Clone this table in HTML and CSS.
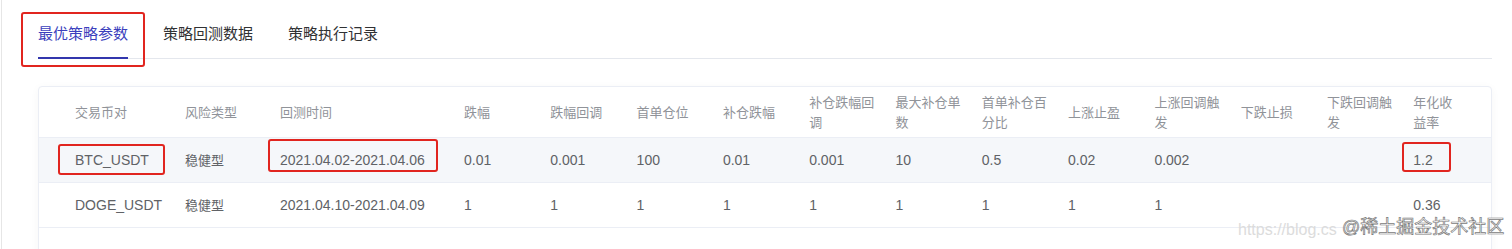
FILE: index.html
```html
<!DOCTYPE html>
<html lang="zh-CN">
<head>
<meta charset="utf-8">
<title>最优策略参数</title>
<link rel="stylesheet" href="styles.css">
</head>
<body>
<div class="page">
  <div class="tabs">
    <div class="tab active"><i class="mark mark-tab"></i>最优策略参数</div>
    <div class="tab">策略回测数据</div>
    <div class="tab">策略执行记录</div>
  </div>

  <div class="card">
    <table class="grid">
      <colgroup>
        <col class="c-pair"><col class="c-risk"><col class="c-time">
        <col class="c-num"><col class="c-num"><col class="c-num"><col class="c-num">
        <col class="c-num"><col class="c-num"><col class="c-num"><col class="c-num">
        <col class="c-num"><col class="c-num"><col class="c-num"><col>
      </colgroup>
      <thead>
        <tr>
          <th>交易币对</th>
          <th>风险类型</th>
          <th>回测时间</th>
          <th>跌幅</th>
          <th>跌幅回调</th>
          <th>首单仓位</th>
          <th>补仓跌幅</th>
          <th>补仓跌幅回<br>调</th>
          <th>最大补仓单<br>数</th>
          <th>首单补仓百<br>分比</th>
          <th>上涨止盈</th>
          <th>上涨回调触<br>发</th>
          <th>下跌止损</th>
          <th>下跌回调触<br>发</th>
          <th>年化收<br>益率</th>
        </tr>
      </thead>
      <tbody>
        <tr class="hover">
          <td><span class="hl">BTC_USDT<i class="mark mark-btc"></i></span></td>
          <td class="cn">稳健型</td>
          <td><span class="hl">2021.04.02-2021.04.06<i class="mark mark-date"></i></span></td>
          <td>0.01</td>
          <td>0.001</td>
          <td>100</td>
          <td>0.01</td>
          <td>0.001</td>
          <td>10</td>
          <td>0.5</td>
          <td>0.02</td>
          <td>0.002</td>
          <td></td>
          <td></td>
          <td><span class="hl">1.2<i class="mark mark-rate"></i></span></td>
        </tr>
        <tr>
          <td>DOGE_USDT</td>
          <td class="cn">稳健型</td>
          <td>2021.04.10-2021.04.09</td>
          <td>1</td>
          <td>1</td>
          <td>1</td>
          <td>1</td>
          <td>1</td>
          <td>1</td>
          <td>1</td>
          <td>1</td>
          <td>1</td>
          <td></td>
          <td></td>
          <td>0.36</td>
        </tr>
      </tbody>
    </table>
  </div>

  <div class="wm-url">https://blog.cs</div>
  <div class="wm-brand">@稀土掘金技术社区</div>
</div>
</body>
</html>
```

FILE: styles.css
```css
* { box-sizing: border-box; }

html, body {
  margin: 0;
  padding: 0;
  background: #ffffff;
  overflow: hidden;
}

body {
  font-family: "Liberation Sans", "Noto Sans CJK SC", sans-serif;
  color: #606266;
}

.page {
  position: relative;
  margin-left: 1px;
  border-left: 1px solid #e6e6e6;
  padding: 0 20px 0 36px;
  height: 249px;
  overflow: hidden;
}

/* ---------- tabs ---------- */
.tabs {
  display: flex;
  gap: 35px;
  border-bottom: 1px solid #e4e7ed;
}

.tab {
  position: relative;
  height: 58px;
  padding-top: 22px;
  line-height: 22px;
  font-family: "Noto Sans CJK SC", sans-serif;
  font-size: 15px;
  color: #303133;
}

.tab.active {
  color: #3b3fbd;
}

.tab.active::after {
  content: "";
  position: absolute;
  left: 0;
  right: 0;
  bottom: -1px;
  height: 2px;
  background: #3236ad;
}

/* ---------- red annotation boxes ---------- */
.mark {
  position: absolute;
  border: 2px solid #e1251f;
  border-radius: 3px;
  pointer-events: none;
}

.mark-tab {
  top: 12px;
  left: -17px;
  right: -17px;
  height: 55px;
}

.hl {
  position: relative;
  display: inline-block;
  line-height: 20px;
}

.mark-btc  { top: -6px;  bottom: -5px; left: -17px; right: -16px; }
.mark-date { top: -11px; bottom: -2px; left: -12px; right: -13px; }
.mark-rate { top: -8px;  bottom: -2px; left: -11px; right: -18px; }

/* ---------- card / table ---------- */
.card {
  margin-top: 27px;
  border: 1px solid #ebeef5;
  border-radius: 4px;
  box-shadow: 0 2px 10px 0 rgba(0, 0, 0, 0.04);
  padding-bottom: 40px;
  background: #fff;
}

.grid {
  width: 100%;
  table-layout: fixed;
  border-collapse: separate;
  border-spacing: 0;
}

.c-pair { width: 136px; }
.c-risk { width: 95px; }
.c-time { width: 184px; }
.c-num  { width: 86.3px; }

.grid th,
.grid td {
  text-align: left;
  padding: 0 10px;
  border-bottom: 1px solid #ebeef5;
  vertical-align: middle;
  line-height: 20px;
  white-space: nowrap;
}

.grid th:first-child,
.grid td:first-child {
  padding-left: 36px;
}

.grid th {
  height: 51px;
  font-family: "Noto Sans CJK SC", sans-serif;
  font-size: 13px;
  font-weight: normal;
  color: #909399;
}

.grid td {
  height: 45px;
  font-size: 14px;
  color: #606266;
}

.grid td.cn {
  font-family: "Noto Sans CJK SC", sans-serif;
  font-size: 13px;
}

.grid tr.hover td {
  background: #f5f7fa;
}

/* ---------- watermark ---------- */
.wm-url {
  position: absolute;
  left: 1236px;
  top: 221px;
  font-size: 16px;
  line-height: 18px;
  color: #dcdcdc;
  white-space: nowrap;
}

.wm-brand {
  position: absolute;
  left: 1340px;
  top: 217px;
  font-family: "Liberation Sans", "Noto Sans CJK SC", sans-serif;
  font-size: 18px;
  line-height: 20px;
  color: rgba(255, 255, 255, 0.92);
  -webkit-text-stroke: 0.7px #7a7a7a;
  white-space: nowrap;
}
```
